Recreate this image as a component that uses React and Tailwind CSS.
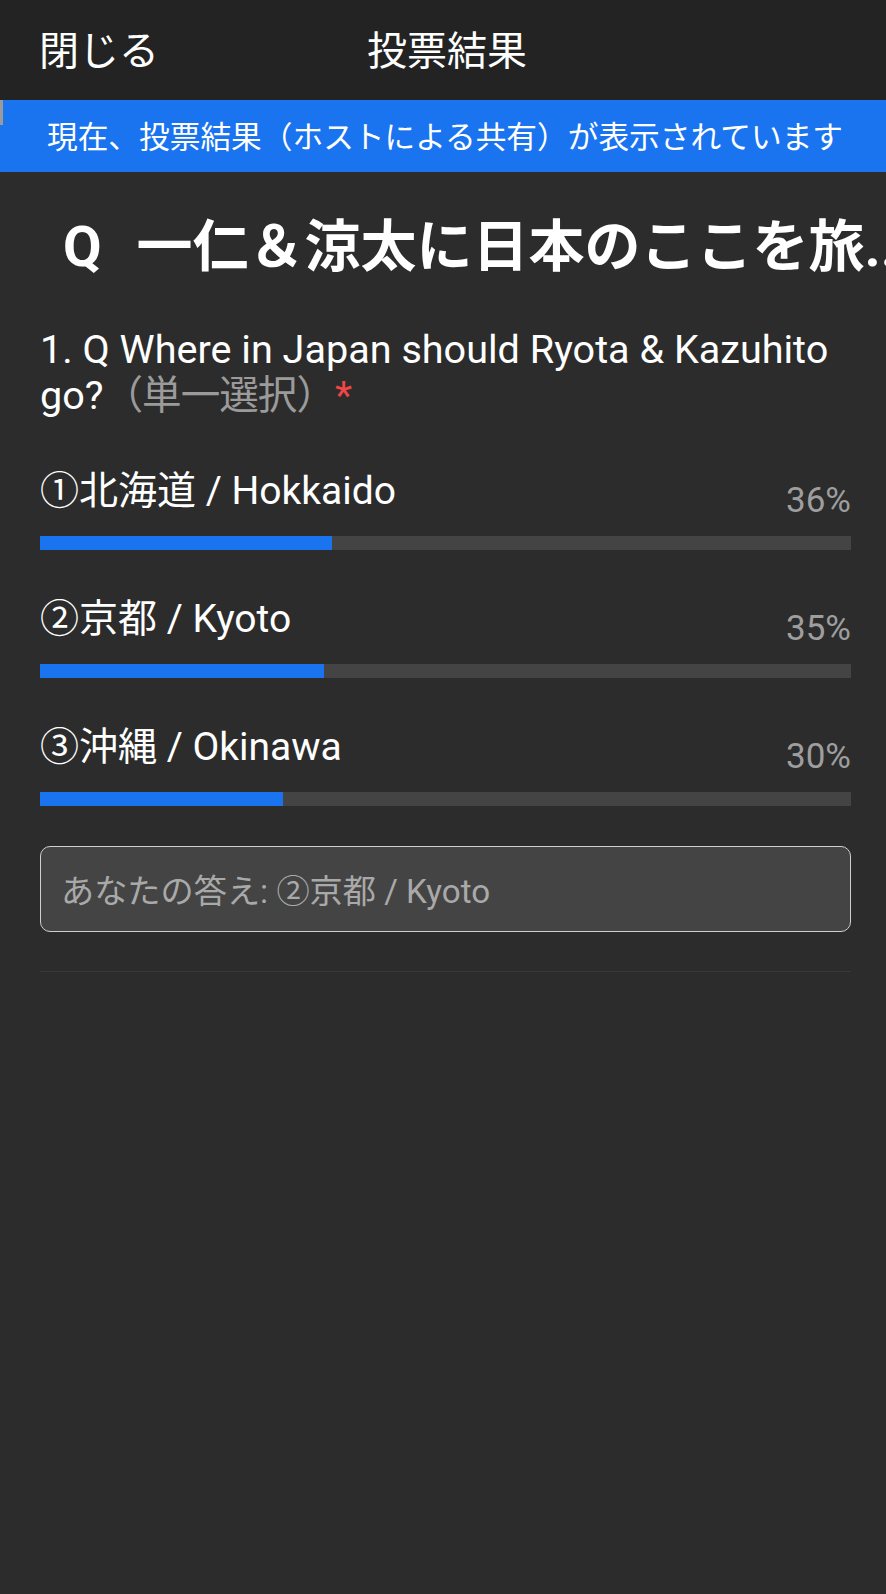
import React from "react";

const font = { fontFamily: 'Roboto, "Noto Sans CJK JP", sans-serif' };

const options = [
  { label: "①北海道 / Hokkaido", pct: 36 },
  { label: "②京都 / Kyoto", pct: 35 },
  { label: "③沖縄 / Okinawa", pct: 30 },
];

export default function App() {
  return (
    <div
      className="w-[886px] h-[1594px] bg-[#2c2c2c] overflow-hidden text-white"
      style={font}
    >
      <header className="h-[100px] bg-[#232323] grid grid-cols-[1fr_auto_1fr] items-center px-[39px] pt-[4px]">
        <div className="text-[40px] leading-none">閉じる</div>
        <div className="pl-[8px] text-[40px] leading-none">投票結果</div>
        <div />
      </header>
      <div className="relative h-[72px] bg-[#1a73ef] flex items-center justify-center pt-[5px] pl-[4px]">
        <div className="absolute left-0 top-0 w-[3px] h-[25px] bg-[#9a9a9a]" />
        <span className="text-[30.7px] leading-none">
          現在、投票結果（ホストによる共有）が表示されています
        </span>
      </div>
      <main className="pl-[40px] pr-[35px]">
        <h1 className="mt-[45px] pl-[23px] whitespace-nowrap text-[56px] font-bold leading-[60px]">
          <span>Q</span>
          <span className="ml-[35px]">一仁＆涼太に日本のここを旅...</span>
        </h1>
        <p className="mt-[50px] text-[39.6px] leading-[46px]">
          1. Q Where in Japan should Ryota &amp; Kazuhito go?
          <span className="text-[#9b9b9b] tracking-[-1px]">（単一選択）</span>
          <span className="text-[#f04646]">*</span>
        </p>
        <div className="mt-[50px] flex flex-col gap-[47px]">
          {options.map((o) => (
            <div key={o.label}>
              <div className="flex justify-between items-start">
                <span className="text-[39px] leading-[44px]">{o.label}</span>
                <span className="mt-[12px] text-[35px] leading-[40px] text-[#9e9e9e]">
                  {o.pct}%
                </span>
              </div>
              <div className="mt-[15px] h-[14px] bg-[#444444]">
                <div className="h-full bg-[#1a73ef]" style={{ width: `${o.pct}%` }} />
              </div>
            </div>
          ))}
        </div>
        <div className="mt-[40px] h-[86px] rounded-[10px] border border-[#cfcfcf] bg-[#444444] flex items-center pl-[20px] pt-[5px]">
          <span className="text-[33.2px] leading-none text-[#a9a9a9]">
            あなたの答え: ②京都 / Kyoto
          </span>
        </div>
        <div className="mt-[39px] h-px bg-[#383838]" />
      </main>
    </div>
  );
}
